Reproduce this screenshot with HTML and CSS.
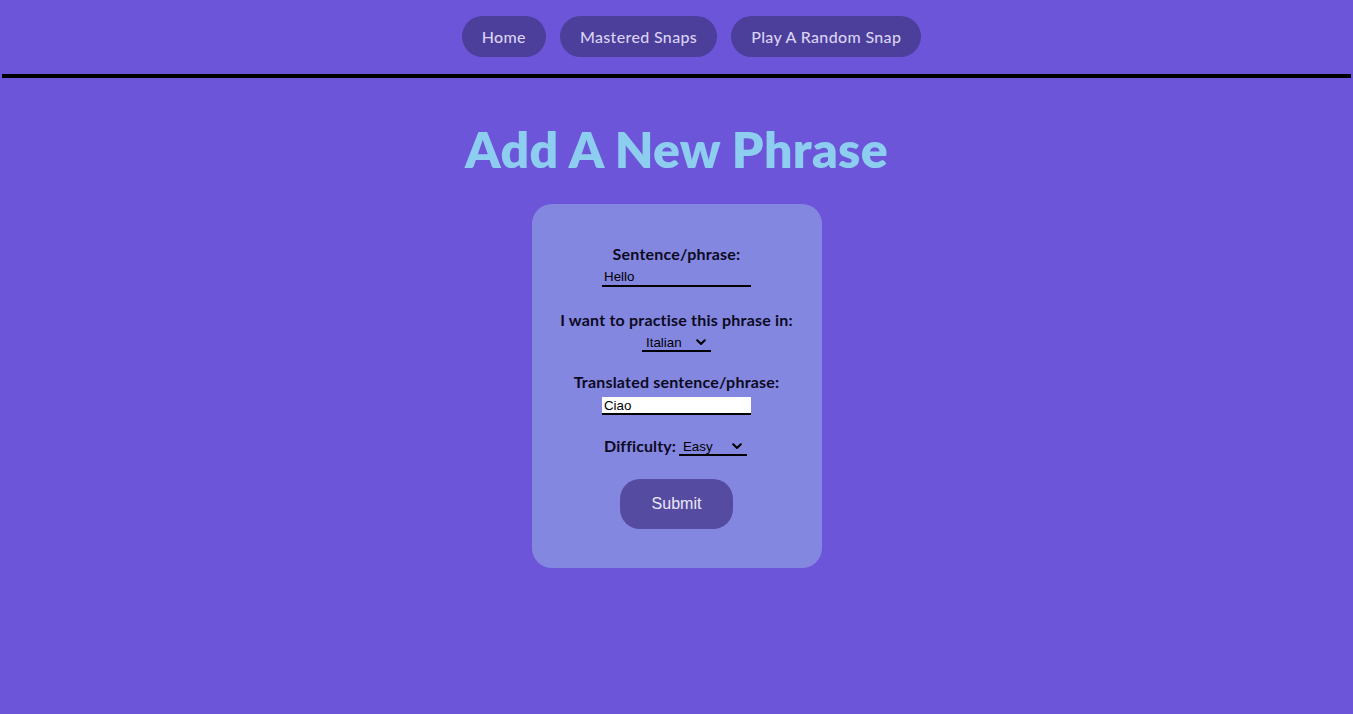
FILE: index.html
```html
<!DOCTYPE html>
<html lang="en">
<head>
<meta charset="utf-8">
<title>Add A New Phrase</title>
<link rel="stylesheet" href="styles.css">
</head>
<body>
<nav class="nav">
  <a class="nav-btn" href="#">Home</a>
  <a class="nav-btn" href="#">Mastered Snaps</a>
  <a class="nav-btn" href="#">Play A Random Snap</a>
</nav>
<div class="rule"></div>
<main class="main">
  <h1 class="title">Add A New Phrase</h1>
  <form class="card">
    <div class="group g1">
      <label class="label" for="phrase">Sentence/phrase:</label>
      <input class="field" id="phrase" type="text" value="Hello">
    </div>
    <div class="group g2">
      <label class="label" for="lang">I want to practise this phrase in:</label>
      <span class="select-wrap lang-wrap">
        <select class="select" id="lang"><option>Italian</option></select>
        <svg class="chev" width="10" height="7" viewBox="0 0 10 7"><path d="M1.2 1.2 L5 5 L8.8 1.2" fill="none" stroke="#000" stroke-width="2" stroke-linecap="round" stroke-linejoin="round"/></svg>
      </span>
    </div>
    <div class="group g3">
      <label class="label" for="trans">Translated sentence/phrase:</label>
      <input class="field focused" id="trans" type="text" value="Ciao">
    </div>
    <div class="row g4">
      <label class="label inline" for="diff">Difficulty:</label>
      <span class="select-wrap diff-wrap">
        <select class="select" id="diff"><option>Easy</option></select>
        <svg class="chev" width="10" height="7" viewBox="0 0 10 7"><path d="M1.2 1.2 L5 5 L8.8 1.2" fill="none" stroke="#000" stroke-width="2" stroke-linecap="round" stroke-linejoin="round"/></svg>
      </span>
    </div>
    <button class="submit" type="button">Submit</button>
  </form>
</main>
</body>
</html>
```
FILE: styles.css
```css
* { box-sizing: border-box; }
html, body { margin: 0; padding: 0; }
body {
  background: #6c55d9;
  font-family: "Lato", "Noto Sans", sans-serif;
  min-height: 714px;
}
.nav {
  display: flex;
  justify-content: center;
  gap: 14px;
  padding-top: 16px;
  padding-left: 30px;
  height: 74px;
}
.nav-btn {
  display: flex;
  align-items: center;
  height: 41px;
  padding: 0 20px 1px;
  border-radius: 21px;
  background: #4c3e9b;
  color: #d9d2f3;
  text-decoration: none;
  font-size: 16px;
  font-weight: 500;
  letter-spacing: 0.35px;
}
.rule {
  height: 4px;
  margin: 0 2px;
  background: #000;
}
.main {
  display: flex;
  flex-direction: column;
  align-items: center;
}
.title {
  margin: 41px 0 0;
  height: 85px;
  line-height: 60px;
  font-size: 50px;
  font-weight: 800;
  color: #8dcdf0;
  letter-spacing: 0.3px;
}
.card {
  width: 290px;
  background: #8487e0;
  border-radius: 20px;
  padding: 40px 0 39px;
  display: flex;
  flex-direction: column;
  align-items: center;
}
.group {
  display: flex;
  flex-direction: column;
  align-items: center;
}
.label {
  display: block;
  font-size: 16px;
  line-height: 20px;
  font-weight: 700;
  color: #0d0a1f;
  letter-spacing: 0.2px;
}
.label.inline { letter-spacing: 0.1px; }
.g1 .label { margin-bottom: 4px; }
.g2 { margin-top: 23px; }
.g2 .label { margin-bottom: 4px; }
.g3 { margin-top: 20px; }
.g3 .label { margin-bottom: 5px; }
.g4 { margin-top: 21px; margin-left: -2px; }
.row {
  display: flex;
  align-items: flex-end;
  gap: 3px;
  height: 20px;
}
.field {
  display: block;
  width: 149px;
  height: 19px;
  padding: 0 2px;
  border: none;
  border-bottom: 2px solid #000;
  background: transparent;
  font-family: "Liberation Sans", Arial, sans-serif;
  font-size: 13.33px;
  color: #000;
  outline: none;
}
.field.focused { background: #fff; height: 18px; }
.select-wrap {
  position: relative;
  display: inline-block;
}
.select {
  -webkit-appearance: none;
  appearance: none;
  display: block;
  height: 18px;
  padding: 0 0 0 4px;
  border: none;
  border-bottom: 2px solid #000;
  border-radius: 0;
  background: transparent;
  font-family: "Liberation Sans", Arial, sans-serif;
  font-size: 13.33px;
  color: #000;
  outline: none;
}
.lang-wrap .select { width: 69px; }
.diff-wrap .select { width: 68px; }
.chev {
  position: absolute;
  top: 5px;
  right: 5px;
  pointer-events: none;
}
.submit {
  margin-top: 23px;
  width: 113px;
  height: 50px;
  border: none;
  border-radius: 20px;
  background: #554ca1;
  color: #ebe7fa;
  font-family: "Liberation Sans", Arial, sans-serif;
  font-size: 16px;
}
```
